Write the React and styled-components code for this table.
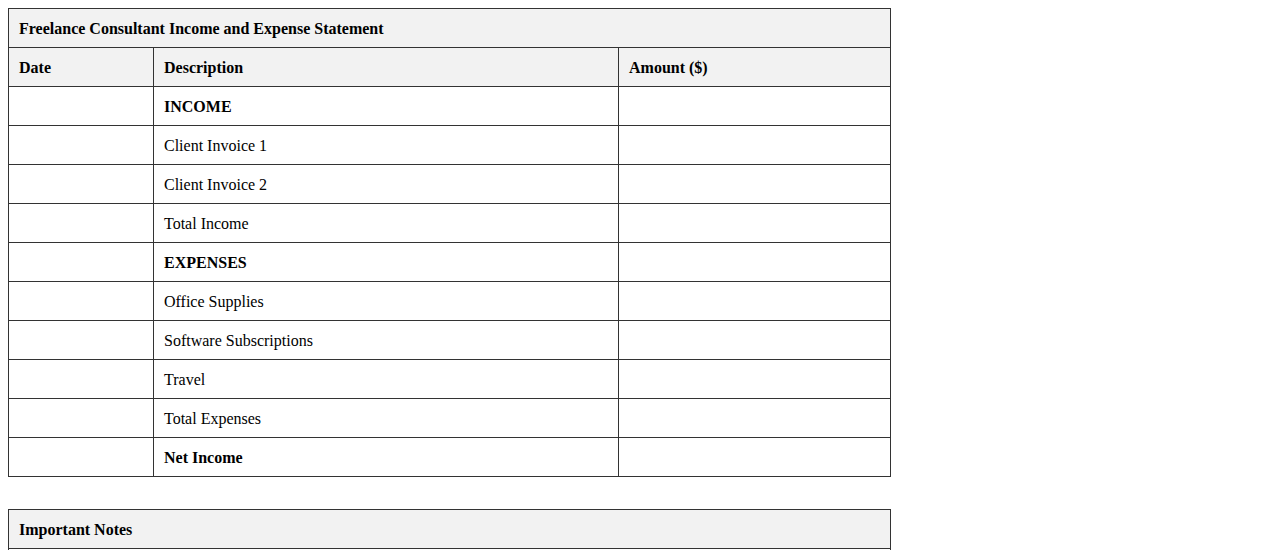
import React from 'react';
import styled, { createGlobalStyle } from 'styled-components';

const GlobalStyle = createGlobalStyle`
    body {
        margin: 8px;
        font-family: "Liberation Serif", "Times New Roman", serif;
        background: #fff;
        color: #000;
    }
`;

const Page = styled.div`
    display: flex;
    flex-direction: column;
    gap: 32px;
`;

const Table = styled.table`
    width: ${(p) => p.width || 882}px;
    border-collapse: collapse;
    font-size: 16px;
    line-height: 18px;
    table-layout: fixed;
`;

const HeadCell = styled.th`
    border: 1px solid #333;
    background-color: #f2f2f2;
    padding: 11px 10px 9px;
    height: 18px;
    text-align: left;
    font-weight: bold;
`;

const Cell = styled.td`
    border: 1px solid #333;
    padding: 11px 10px 9px;
    height: 18px;
    font-weight: ${(p) => (p.bold ? 'bold' : 'normal')};
`;

const rows = [
    { label: 'INCOME', bold: true },
    { label: 'Client Invoice 1' },
    { label: 'Client Invoice 2' },
    { label: 'Total Income' },
    { label: 'EXPENSES', bold: true },
    { label: 'Office Supplies' },
    { label: 'Software Subscriptions' },
    { label: 'Travel' },
    { label: 'Total Expenses' },
    { label: 'Net Income', bold: true },
];

const App = () => {
    return (
        <>
            <GlobalStyle />
            <Page>
                <Table>
                    <colgroup>
                        <col style={{ width: 145 }} />
                        <col style={{ width: 465 }} />
                        <col style={{ width: 272 }} />
                    </colgroup>
                    <thead>
                        <tr>
                            <HeadCell colSpan={3}>Freelance Consultant Income and Expense Statement</HeadCell>
                        </tr>
                        <tr>
                            <HeadCell>Date</HeadCell>
                            <HeadCell>Description</HeadCell>
                            <HeadCell>Amount ($)</HeadCell>
                        </tr>
                    </thead>
                    <tbody>
                        {rows.map((r) => (
                            <tr key={r.label}>
                                <Cell></Cell>
                                <Cell bold={r.bold}>{r.label}</Cell>
                                <Cell></Cell>
                            </tr>
                        ))}
                    </tbody>
                </Table>
                <Table width={883}>
                    <thead>
                        <tr>
                            <HeadCell>Important Notes</HeadCell>
                        </tr>
                    </thead>
                    <tbody>
                        <tr>
                            <Cell></Cell>
                        </tr>
                    </tbody>
                </Table>
            </Page>
        </>
    );
};

export default App;
